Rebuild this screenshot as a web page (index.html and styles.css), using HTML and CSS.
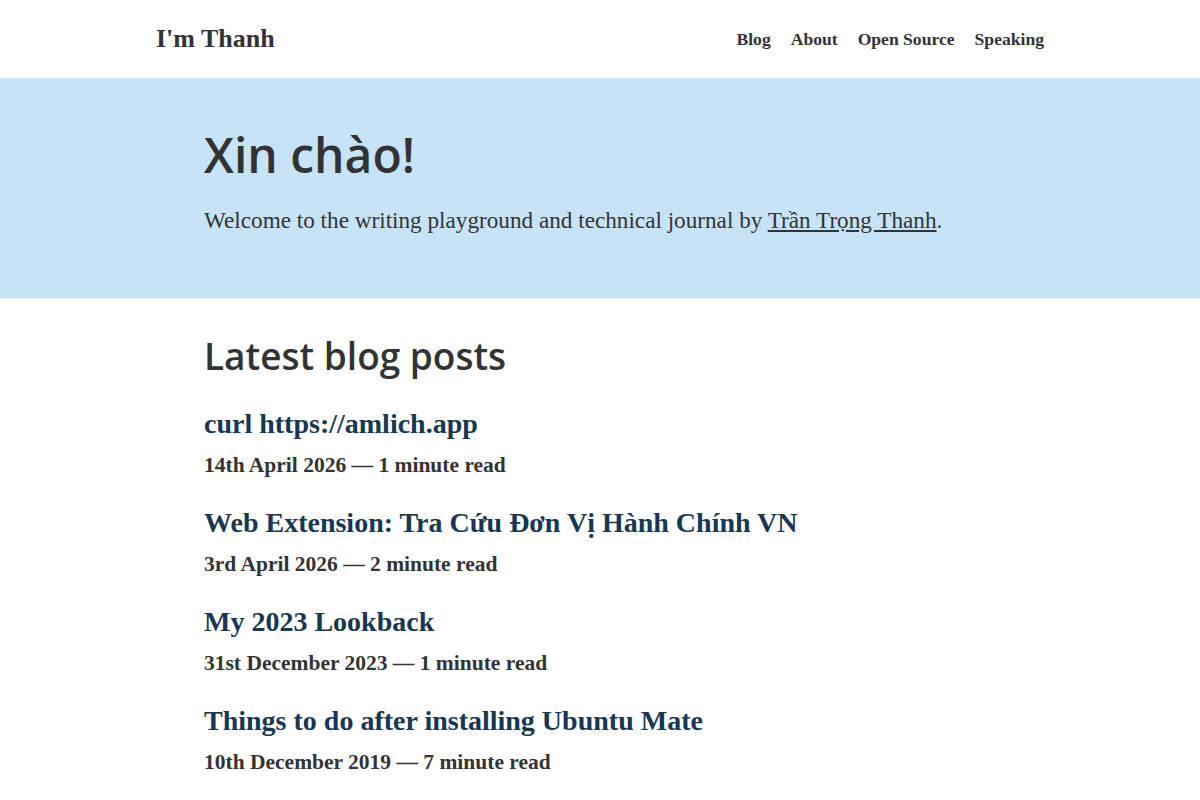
FILE: index.html
```html
<!DOCTYPE html>
<html lang="en">
<head>
<meta charset="utf-8">
<title>I'm Thanh</title>
<link rel="stylesheet" href="styles.css">
</head>
<body>
<header class="site-header">
  <div class="header-inner">
    <a class="logo" href="#">I'm Thanh</a>
    <nav class="nav">
      <a href="#">Blog</a>
      <a href="#">About</a>
      <a href="#">Open Source</a>
      <a href="#">Speaking</a>
    </nav>
  </div>
</header>
<section class="hero">
  <div class="content">
    <h1 class="hero-title">Xin chào!</h1>
    <p class="hero-text">Welcome to the writing playground and technical journal by <a href="#">Trần Trọng Thanh</a>.</p>
  </div>
</section>
<main class="content posts">
  <h2 class="section-title">Latest blog posts</h2>
  <article class="post">
    <h3 class="post-title"><a href="#">curl https://amlich.app</a></h3>
    <p class="post-meta">14th April 2026 — 1 minute read</p>
  </article>
  <article class="post">
    <h3 class="post-title"><a href="#">Web Extension: Tra Cứu Đơn Vị Hành Chính VN</a></h3>
    <p class="post-meta">3rd April 2026 — 2 minute read</p>
  </article>
  <article class="post">
    <h3 class="post-title"><a href="#">My 2023 Lookback</a></h3>
    <p class="post-meta">31st December 2023 — 1 minute read</p>
  </article>
  <article class="post">
    <h3 class="post-title"><a href="#">Things to do after installing Ubuntu Mate</a></h3>
    <p class="post-meta">10th December 2019 — 7 minute read</p>
  </article>
</main>
</body>
</html>
```
FILE: styles.css
```css
* { box-sizing: border-box; }

body {
  margin: 0;
  font-family: "Liberation Serif", "DejaVu Serif", serif;
  color: #333;
  background: #fff;
}

a { color: inherit; }

.site-header {
  height: 78px;
  background: #fff;
}

.header-inner {
  width: 888px;
  height: 100%;
  margin: 0 auto;
  display: flex;
  align-items: center;
  justify-content: space-between;
}

.logo {
  font-size: 26px;
  font-weight: 700;
  text-decoration: none;
  color: #333;
}

.nav {
  display: flex;
  gap: 20px;
}

.nav a {
  font-size: 17.6px;
  font-weight: 700;
  text-decoration: none;
  color: #333;
}

.hero {
  background: #c7e3f8;
  height: 220px;
  border-bottom: 1px solid #c0d8ec;
}

.content {
  width: 792px;
  margin: 0 auto;
}

.hero .content {
  padding-top: 45px;
}

.hero-title {
  margin: 0;
  font-family: "Open Sans", sans-serif;
  font-weight: 600;
  font-size: 48px;
  line-height: 64px;
  color: #333;
}

.hero-text {
  margin: 18px 0 0;
  font-size: 23.2px;
  line-height: 30px;
  color: #333;
}

.hero-text a {
  color: #333;
}

.posts {
  padding-top: 32px;
  padding-bottom: 20px;
}

.section-title {
  margin: 0 0 24px;
  font-family: "Open Sans", sans-serif;
  font-weight: 600;
  font-size: 37px;
  line-height: 52px;
  color: #333;
}

.post {
  margin-bottom: 25px;
}

.post-title {
  margin: 0;
  font-size: 28px;
  line-height: 36px;
  font-weight: 700;
}

.post-title a {
  color: #173753;
  text-decoration: none;
}

.post-meta {
  margin: 8px 0 0;
  font-size: 21.5px;
  line-height: 30px;
  font-weight: 700;
  color: #333;
}
```
